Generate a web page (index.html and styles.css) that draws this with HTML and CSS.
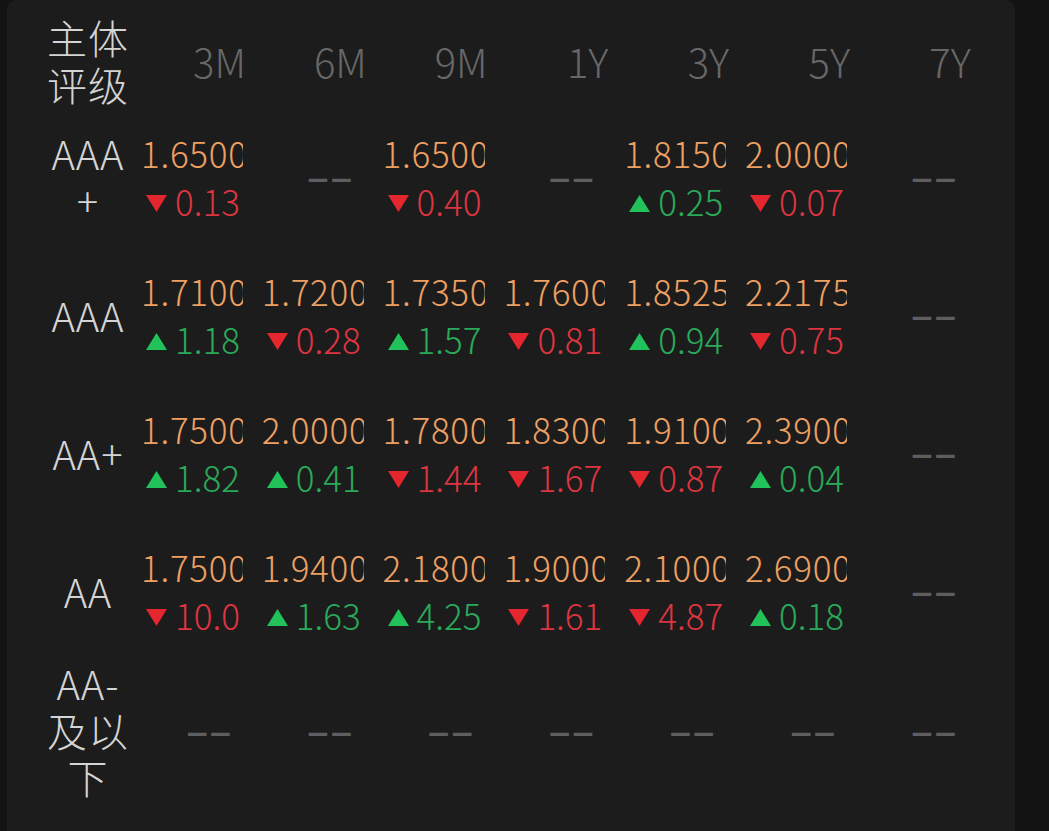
FILE: index.html
```html
<!DOCTYPE html>
<html lang="zh-CN">
<head>
<meta charset="utf-8">
<title>主体评级</title>
<link rel="stylesheet" href="styles.css">
</head>
<body>
<div class="card">
  <div class="table">
    <div class="row head">
      <div class="label">主体评级</div>
      <div class="th">3M</div><div class="th">6M</div><div class="th">9M</div><div class="th">1Y</div><div class="th">3Y</div><div class="th">5Y</div><div class="th">7Y</div>
    </div>

    <div class="row">
      <div class="label">AAA+</div>
      <div class="cell"><div class="val">1.6500</div><div class="chg down"><svg class="tri" viewBox="0 0 20 16"><path d="M0 0H20L10 16Z"/></svg>0.13</div></div>
      <div class="cell"><span class="dash">––</span></div>
      <div class="cell"><div class="val">1.6500</div><div class="chg down"><svg class="tri" viewBox="0 0 20 16"><path d="M0 0H20L10 16Z"/></svg>0.40</div></div>
      <div class="cell"><span class="dash">––</span></div>
      <div class="cell"><div class="val">1.8150</div><div class="chg up"><svg class="tri" viewBox="0 0 20 16"><path d="M10 0L20 16H0Z"/></svg>0.25</div></div>
      <div class="cell"><div class="val">2.0000</div><div class="chg down"><svg class="tri" viewBox="0 0 20 16"><path d="M0 0H20L10 16Z"/></svg>0.07</div></div>
      <div class="cell"><span class="dash">––</span></div>
    </div>

    <div class="row">
      <div class="label">AAA</div>
      <div class="cell"><div class="val">1.7100</div><div class="chg up"><svg class="tri" viewBox="0 0 20 16"><path d="M10 0L20 16H0Z"/></svg>1.18</div></div>
      <div class="cell"><div class="val">1.7200</div><div class="chg down"><svg class="tri" viewBox="0 0 20 16"><path d="M0 0H20L10 16Z"/></svg>0.28</div></div>
      <div class="cell"><div class="val">1.7350</div><div class="chg up"><svg class="tri" viewBox="0 0 20 16"><path d="M10 0L20 16H0Z"/></svg>1.57</div></div>
      <div class="cell"><div class="val">1.7600</div><div class="chg down"><svg class="tri" viewBox="0 0 20 16"><path d="M0 0H20L10 16Z"/></svg>0.81</div></div>
      <div class="cell"><div class="val">1.8525</div><div class="chg up"><svg class="tri" viewBox="0 0 20 16"><path d="M10 0L20 16H0Z"/></svg>0.94</div></div>
      <div class="cell"><div class="val">2.2175</div><div class="chg down"><svg class="tri" viewBox="0 0 20 16"><path d="M0 0H20L10 16Z"/></svg>0.75</div></div>
      <div class="cell"><span class="dash">––</span></div>
    </div>

    <div class="row">
      <div class="label">AA+</div>
      <div class="cell"><div class="val">1.7500</div><div class="chg up"><svg class="tri" viewBox="0 0 20 16"><path d="M10 0L20 16H0Z"/></svg>1.82</div></div>
      <div class="cell"><div class="val">2.0000</div><div class="chg up"><svg class="tri" viewBox="0 0 20 16"><path d="M10 0L20 16H0Z"/></svg>0.41</div></div>
      <div class="cell"><div class="val">1.7800</div><div class="chg down"><svg class="tri" viewBox="0 0 20 16"><path d="M0 0H20L10 16Z"/></svg>1.44</div></div>
      <div class="cell"><div class="val">1.8300</div><div class="chg down"><svg class="tri" viewBox="0 0 20 16"><path d="M0 0H20L10 16Z"/></svg>1.67</div></div>
      <div class="cell"><div class="val">1.9100</div><div class="chg down"><svg class="tri" viewBox="0 0 20 16"><path d="M0 0H20L10 16Z"/></svg>0.87</div></div>
      <div class="cell"><div class="val">2.3900</div><div class="chg up"><svg class="tri" viewBox="0 0 20 16"><path d="M10 0L20 16H0Z"/></svg>0.04</div></div>
      <div class="cell"><span class="dash">––</span></div>
    </div>

    <div class="row">
      <div class="label">AA</div>
      <div class="cell"><div class="val">1.7500</div><div class="chg down"><svg class="tri" viewBox="0 0 20 16"><path d="M0 0H20L10 16Z"/></svg>10.0</div></div>
      <div class="cell"><div class="val">1.9400</div><div class="chg up"><svg class="tri" viewBox="0 0 20 16"><path d="M10 0L20 16H0Z"/></svg>1.63</div></div>
      <div class="cell"><div class="val">2.1800</div><div class="chg up"><svg class="tri" viewBox="0 0 20 16"><path d="M10 0L20 16H0Z"/></svg>4.25</div></div>
      <div class="cell"><div class="val">1.9000</div><div class="chg down"><svg class="tri" viewBox="0 0 20 16"><path d="M0 0H20L10 16Z"/></svg>1.61</div></div>
      <div class="cell"><div class="val">2.1000</div><div class="chg down"><svg class="tri" viewBox="0 0 20 16"><path d="M0 0H20L10 16Z"/></svg>4.87</div></div>
      <div class="cell"><div class="val">2.6900</div><div class="chg up"><svg class="tri" viewBox="0 0 20 16"><path d="M10 0L20 16H0Z"/></svg>0.18</div></div>
      <div class="cell"><span class="dash">––</span></div>
    </div>

    <div class="row">
      <div class="label">AA-及以下</div>
      <div class="cell"><span class="dash">––</span></div>
      <div class="cell"><span class="dash">––</span></div>
      <div class="cell"><span class="dash">––</span></div>
      <div class="cell"><span class="dash">––</span></div>
      <div class="cell"><span class="dash">––</span></div>
      <div class="cell"><span class="dash">––</span></div>
      <div class="cell"><span class="dash">––</span></div>
    </div>
  </div>
</div>
</body>
</html>
```

FILE: styles.css
```css
* { box-sizing: border-box; }
html, body {
  margin: 0;
  padding: 0;
  background: #131313;
  height: 100%;
  overflow: hidden;
}
body {
  font-family: "Noto Sans CJK SC", "Noto Sans", sans-serif;
  font-weight: 300;
}
.card {
  margin-left: 7px;
  width: 1008px;
  height: 100%;
  background: #1c1c1c;
  border-radius: 9px 9px 0 0;
  padding: 14px 0 0 39px;
  overflow: hidden;
}
.table {
  display: flex;
  flex-direction: column;
}
.row {
  display: grid;
  grid-template-columns: 95px repeat(7, 120.8px);
  align-items: center;
  min-height: 138px;
}
.row.head {
  min-height: 0;
  height: 94px;
}
.label {
  width: 84px;
  text-align: center;
  font-size: 40px;
  line-height: 47px;
  letter-spacing: 1px;
  color: #d4d4d4;
  word-break: break-all;
}
.th {
  width: 105px;
  text-align: right;
  font-size: 40px;
  line-height: 48px;
  color: #676767;
}
.cell {
  width: 102px;
  overflow: hidden;
  white-space: nowrap;
}
.val {
  font-size: 35px;
  line-height: 48px;
  letter-spacing: 0.7px;
  color: #eda062;
}
.chg {
  font-size: 35px;
  line-height: 48px;
  display: flex;
  align-items: center;
}
.chg.down { color: #dc3540; }
.chg.up { color: #2aa95a; }
.tri {
  width: 21px;
  height: 17px;
  margin: 4px 8px 0 5px;
  flex: none;
}
.chg.down .tri { fill: #e4262f; }
.chg.up .tri { fill: #22c25b; }
.dash {
  display: block;
  margin-left: 47px;
  font-family: "Liberation Sans", sans-serif;
  font-weight: 400;
  font-size: 33px;
  line-height: 48px;
  letter-spacing: 5px;
  color: #5e5e5e;
  text-shadow: 0 1px 0 #5e5e5e;
}
```
